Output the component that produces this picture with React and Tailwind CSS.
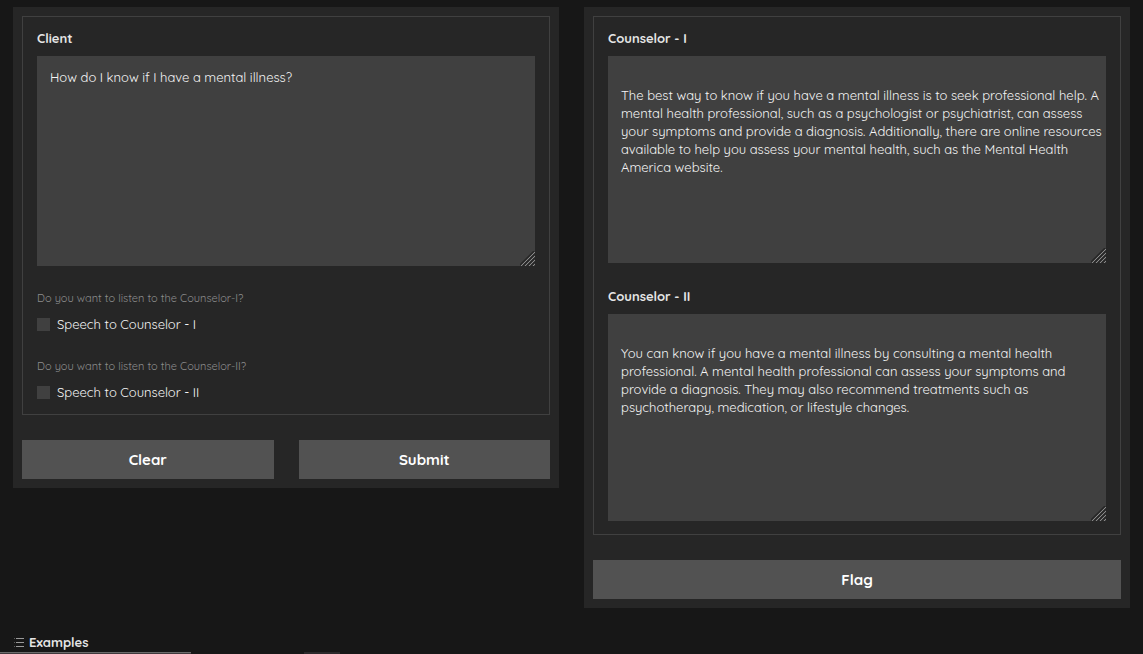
import { useState } from "react";

function Grip() {
  return (
    <svg
      className="pointer-events-none absolute right-0 bottom-0 size-[15px]"
      viewBox="0 0 15 15"
      fill="none"
      aria-hidden="true"
    >
      <path d="M-1 15L15 -1M3 15L15 3M7 15L15 7M11 15L15 11" stroke="#262626" strokeWidth="1.4" />
      <path d="M1 15L15 1M5 15L15 5M9 15L15 9M13 15L15 13" stroke="#8a8a8a" strokeWidth="1" />
    </svg>
  );
}

function TextField({ id, label, value, onChange, size }) {
  return (
    <div>
      <label htmlFor={id} className="block text-[13px] leading-4 font-bold text-[#e5e5e5]">
        {label}
      </label>
      <div className="relative mt-[10px]">
        <textarea
          id={id}
          value={value}
          onChange={onChange}
          readOnly={!onChange}
          className={`block w-full resize-none bg-[#404040] py-3 pr-1 pl-[13px] text-[13px] leading-[18px] text-[#f5f5f5] outline-none ${size}`}
        />
        <Grip />
      </div>
    </div>
  );
}

function SpeechOption({ id, hint, label }) {
  return (
    <div>
      <p className="text-[11px] leading-4 text-[#8c8c8c]">{hint}</p>
      <label htmlFor={id} className="mt-[10px] flex items-center gap-[7px] text-[13px] leading-4 text-[#f5f5f5]">
        <input id={id} type="checkbox" className="size-[13px] appearance-none bg-[#404040] checked:bg-[#a3a3a3]" />
        {label}
      </label>
    </div>
  );
}

function Action({ children, onClick }) {
  return (
    <button
      type="button"
      onClick={onClick}
      className="h-[39px] flex-1 bg-[#525252] text-[15px] leading-5 font-bold text-white hover:bg-[#5c5c5c]"
    >
      {children}
    </button>
  );
}

const ANSWER_ONE =
  "\nThe best way to know if you have a mental illness is to seek professional help. A mental health professional, such as a psychologist or psychiatrist, can assess your symptoms and provide a diagnosis. Additionally, there are online resources available to help you assess your mental health, such as the Mental Health America website.";
const ANSWER_TWO =
  "\nYou can know if you have a mental illness by consulting a mental health professional. A mental health professional can assess your symptoms and provide a diagnosis. They may also recommend treatments such as psychotherapy, medication, or lifestyle changes.";

export default function App() {
  const [question, setQuestion] = useState("How do I know if I have a mental illness?");

  return (
    <div className="flex h-screen flex-col overflow-hidden bg-[#171717] font-['Quicksand','Lato',sans-serif]">
      <main className="grid grid-cols-2 items-start gap-[25px] px-[13px] pt-[7px]">
        <section className="flex flex-col gap-[25px] bg-[#262626] p-[9px]">
          <div className="border border-[#404040] px-[14px] pt-[13px] pb-[14px]">
            <TextField
              id="client"
              label="Client"
              value={question}
              onChange={(e) => setQuestion(e.target.value)}
              size="h-[210px]"
            />
            <div className="mt-6 flex flex-col gap-[26px]">
              <SpeechOption id="speech-1" hint="Do you want to listen to the Counselor-I?" label="Speech to Counselor - I" />
              <SpeechOption id="speech-2" hint="Do you want to listen to the Counselor-II?" label="Speech to Counselor - II" />
            </div>
          </div>
          <div className="flex gap-[25px]">
            <Action onClick={() => setQuestion("")}>Clear</Action>
            <Action>Submit</Action>
          </div>
        </section>

        <section className="flex flex-col gap-[25px] bg-[#262626] p-[9px]">
          <div className="flex flex-col gap-[25px] border border-[#404040] px-[14px] py-[13px]">
            <TextField id="counselor-1" label="Counselor - I" value={ANSWER_ONE} size="h-[207px]" />
            <TextField id="counselor-2" label="Counselor - II" value={ANSWER_TWO} size="h-[207px]" />
          </div>
          <div className="flex">
            <Action>Flag</Action>
          </div>
        </section>
      </main>

      <section className="mt-[25px] px-[13px] pb-px">
        <h2 className="flex items-center gap-1 text-[13px] leading-[18px] font-bold text-[#e5e5e5]">
          <svg className="h-3 w-3" viewBox="0 0 12 12" aria-hidden="true">
            <path d="M3 2.5H11M3 6.5H11M3 10.5H11" stroke="#9a9a9a" />
            <path d="M1 2.5H2M1 6.5H2M1 10.5H2" stroke="#5c5c5c" />
          </svg>
          Examples
        </h2>
      </section>
      <div className="flex h-0.5">
        <div className="w-[191px] border-t border-[#6b6b6b] bg-[#3f3a3d]" />
        <div className="ml-[113px] w-9 bg-[#2c2a2c]" />
      </div>
    </div>
  );
}
